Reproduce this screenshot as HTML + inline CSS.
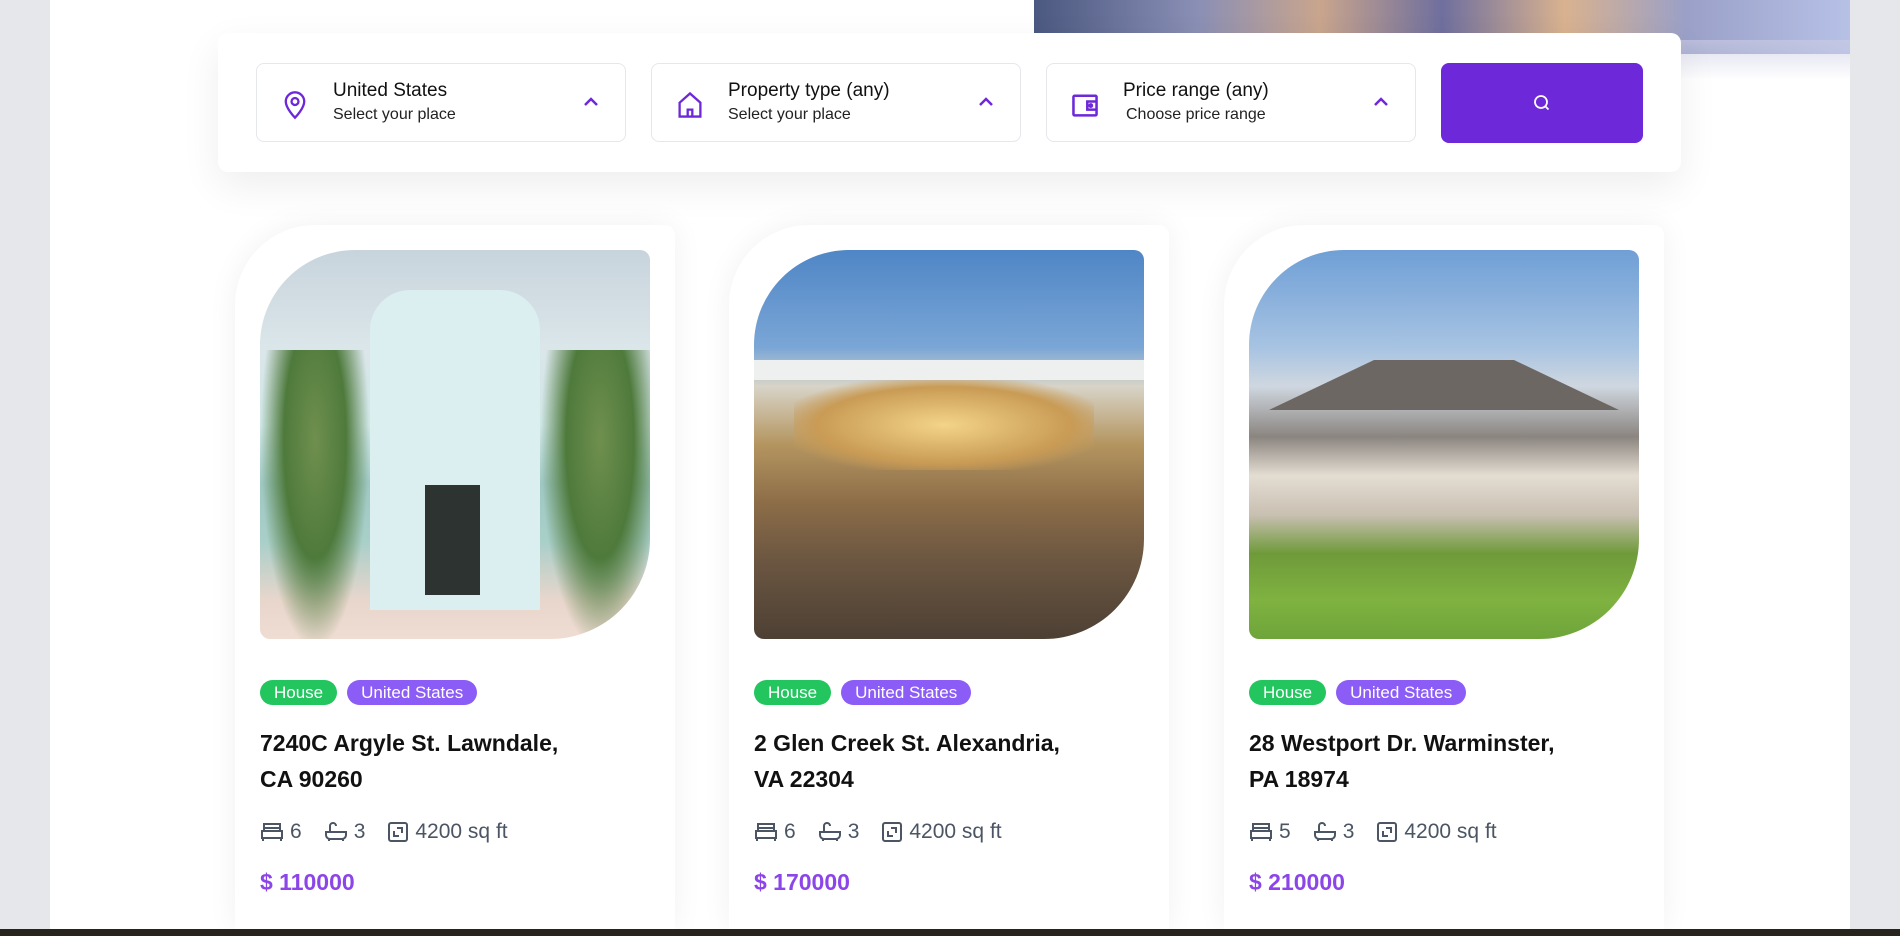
<!DOCTYPE html>
<html><head><meta charset="utf-8"><style>
*{box-sizing:border-box;margin:0;padding:0}
html,body{width:1900px;height:936px;overflow:hidden}
body{background:#e6e7eb;font-family:"Liberation Sans",sans-serif;position:relative}
.main{position:absolute;left:50px;top:0;width:1800px;height:936px;background:#fff}
.hero{position:absolute;left:1034px;top:0;width:816px;height:54px;background:linear-gradient(90deg,#4b5880,#8a8fb5 20%,#c9a58d 35%,#6f6f9e 50%,#d9b28f 65%,#9aa0c8 80%,#b7c1e6);}
.hero:after{content:"";position:absolute;left:0;right:0;top:40px;height:40px;background:linear-gradient(#c9cbe3aa,#ffffff00)}
.search{position:absolute;left:218px;top:33px;width:1463px;height:139px;background:#fff;border-radius:10px;box-shadow:0 14px 40px rgba(0,0,0,.07)}
.field{position:absolute;top:30px;width:370px;height:79px;border:1px solid #e5e7eb;border-radius:8px}
.field svg.ic{position:absolute;left:24px;top:26px}
.field .t{position:absolute;left:76px;top:16px;font-size:19px;color:#111}
.field .s{position:absolute;left:76px;top:42px;font-size:16px;color:#222}
.field .ch{position:absolute;right:26px;top:32px}
.btn{position:absolute;left:1223px;top:30px;width:202px;height:80px;background:#6d28d9;border-radius:8px}
.card{position:absolute;top:225px;width:440px;height:704px;background:#fff;border-radius:80px 10px 0 0;box-shadow:0 0 30px rgba(0,0,0,.06)}
.img{position:absolute;left:25px;top:25px;width:390px;height:389px;border-radius:95px 10px 100px 10px;overflow:hidden}
.tags{position:absolute;left:25px;top:455px;display:flex;gap:10px}
.tag{height:25px;line-height:25px;padding:0 14px;border-radius:13px;color:#fff;font-size:17px}
.title{position:absolute;left:25px;top:500px;font-size:23px;font-weight:bold;line-height:36px;color:#111}
.feat{position:absolute;left:25px;top:820px;font-size:21px;color:#4b5563;display:flex;align-items:center}
.feat svg{margin-right:6px}
.price{position:absolute;left:25px;top:869px;font-size:23px;font-weight:bold;color:#8b45e8}
.bar{position:absolute;left:0;top:929px;width:1900px;height:7px;background:#27231d;z-index:5}
</style></head><body>
<div class="main"></div>
<div class="hero"></div>
<div class="search">
 <div class="field" style="left:38px">
  <svg class="ic" width="28" height="30" viewBox="0 0 24 26" fill="none" stroke="#6d28d9" stroke-width="2"><path d="M12 24s8-8 8-14a8 8 0 0 0-16 0c0 6 8 14 8 14z"/><circle cx="12" cy="10" r="3"/></svg>
  <div class="t">United States</div><div class="s">Select your place</div>
  <svg class="ch" width="16" height="12" viewBox="0 0 16 12"><path d="M2 9l6-6 6 6" stroke="#6d28d9" stroke-width="2.5" fill="none"/></svg></div>
 <div class="field" style="left:433px">
  <svg class="ic" width="28" height="30" viewBox="0 0 24 26" fill="none" stroke="#6d28d9" stroke-width="2"><path d="M3 11l9-8 9 8v12H3z"/><path d="M10 23v-6h4v6"/></svg>
  <div class="t">Property type (any)</div><div class="s">Select your place</div>
  <svg class="ch" width="16" height="12" viewBox="0 0 16 12"><path d="M2 9l6-6 6 6" stroke="#6d28d9" stroke-width="2.5" fill="none"/></svg></div>
 <div class="field" style="left:828px">
  <svg class="ic" width="28" height="30" viewBox="0 0 24 26" fill="none" stroke="#6d28d9" stroke-width="2.2"><rect x="2" y="5" width="20" height="17" rx="1"/><path d="M22 10h-8v7h8"/><circle cx="17" cy="13.5" r="1"/></svg>
  <div class="t">Price range (any)</div><div class="s" style="left:79px">Choose price range</div>
  <svg class="ch" width="16" height="12" viewBox="0 0 16 12"><path d="M2 9l6-6 6 6" stroke="#6d28d9" stroke-width="2.5" fill="none"/></svg></div>
 <div class="btn"><svg style="position:absolute;left:92px;top:31px" width="18" height="18" viewBox="0 0 18 18" fill="none" stroke="#fff" stroke-width="1.8"><circle cx="8" cy="8" r="6"/><path d="M12.5 12.5l3 3"/></svg></div>
</div>

<div class="card" style="left:235px">
 <div class="img" style="background:linear-gradient(180deg,#c8d4dc 0%,#dbe6ea 25%,#cfe6e6 45%,#9fc8c2 60%,#a9cfc9 75%,#e8d6cc 90%,#efdcd2 100%)">
  <div style="position:absolute;left:110px;top:40px;width:170px;height:320px;background:#dbeef0;border-radius:40px 40px 0 0"></div>
  <div style="position:absolute;left:0;top:100px;width:110px;height:300px;background:radial-gradient(ellipse at 50% 30%,#6f8f4e,#4e7a3c 40%,transparent 70%)"></div>
  <div style="position:absolute;left:280px;top:100px;width:120px;height:300px;background:radial-gradient(ellipse at 50% 30%,#6f8f4e,#4e7a3c 40%,transparent 70%)"></div>
  <div style="position:absolute;left:165px;top:235px;width:55px;height:110px;background:#2d3330"></div>
 </div>
 <div class="tags"><span class="tag" style="background:#22c55e">House</span><span class="tag" style="background:#8b5cf6">United States</span></div>
 <div class="title">7240C Argyle St. Lawndale,<br>CA 90260</div>
</div>
<div class="card" style="left:729px">
 <div class="img" style="background:linear-gradient(180deg,#4f86c6 0%,#7aa6d6 25%,#d8d4c8 35%,#b49560 50%,#8c6d48 65%,#6b5641 80%,#4d4034 100%)">
  <div style="position:absolute;left:40px;top:130px;width:300px;height:90px;background:radial-gradient(ellipse,#f3d488,#c99b55 60%,transparent 80%)"></div>
  <div style="position:absolute;left:0;top:110px;width:390px;height:20px;background:#eef0f0"></div>
 </div>
 <div class="tags"><span class="tag" style="background:#22c55e">House</span><span class="tag" style="background:#8b5cf6">United States</span></div>
 <div class="title">2 Glen Creek St. Alexandria,<br>VA 22304</div>
</div>
<div class="card" style="left:1224px">
 <div class="img" style="background:linear-gradient(180deg,#6f9fd6 0%,#a7c3e2 25%,#cfd7e0 35%,#8b8580 48%,#e4ddd2 58%,#c9c0b2 68%,#6f9a3a 78%,#7fb240 90%,#6ea43a 100%)">
  <div style="position:absolute;left:20px;top:110px;width:350px;height:50px;background:#6c6763;clip-path:polygon(0 100%,30% 0,70% 0,100% 100%)"></div>
 </div>
 <div class="tags"><span class="tag" style="background:#22c55e">House</span><span class="tag" style="background:#8b5cf6">United States</span></div>
 <div class="title">28 Westport Dr. Warminster,<br>PA 18974</div>
</div>

<div class="feat" style="left:260px"><svg width="24" height="22" viewBox="0 0 24 22" fill="none" stroke="#4b5563" stroke-width="2"><path d="M4 10V3h16v7M2 10h20v7H2zM3 17v3M21 17v3M4 7h16"/></svg>6<span style="width:22px"></span><svg width="24" height="22" viewBox="0 0 24 22" fill="none" stroke="#4b5563" stroke-width="2"><path d="M2 11h20v3a4 4 0 0 1-4 4H6a4 4 0 0 1-4-4zM6 11V5a3 3 0 0 1 6 0M5 18v2M19 18v2"/></svg>3<span style="width:22px"></span><svg width="22" height="22" viewBox="0 0 22 22" fill="none" stroke="#4b5563" stroke-width="2"><rect x="2" y="2" width="18" height="18" rx="2"/><path d="M7 10v5h5M15 12V7h-5"/></svg>4200 sq ft</div>
<div class="feat" style="left:754px"><svg width="24" height="22" viewBox="0 0 24 22" fill="none" stroke="#4b5563" stroke-width="2"><path d="M4 10V3h16v7M2 10h20v7H2zM3 17v3M21 17v3M4 7h16"/></svg>6<span style="width:22px"></span><svg width="24" height="22" viewBox="0 0 24 22" fill="none" stroke="#4b5563" stroke-width="2"><path d="M2 11h20v3a4 4 0 0 1-4 4H6a4 4 0 0 1-4-4zM6 11V5a3 3 0 0 1 6 0M5 18v2M19 18v2"/></svg>3<span style="width:22px"></span><svg width="22" height="22" viewBox="0 0 22 22" fill="none" stroke="#4b5563" stroke-width="2"><rect x="2" y="2" width="18" height="18" rx="2"/><path d="M7 10v5h5M15 12V7h-5"/></svg>4200 sq ft</div>
<div class="feat" style="left:1249px"><svg width="24" height="22" viewBox="0 0 24 22" fill="none" stroke="#4b5563" stroke-width="2"><path d="M4 10V3h16v7M2 10h20v7H2zM3 17v3M21 17v3M4 7h16"/></svg>5<span style="width:22px"></span><svg width="24" height="22" viewBox="0 0 24 22" fill="none" stroke="#4b5563" stroke-width="2"><path d="M2 11h20v3a4 4 0 0 1-4 4H6a4 4 0 0 1-4-4zM6 11V5a3 3 0 0 1 6 0M5 18v2M19 18v2"/></svg>3<span style="width:22px"></span><svg width="22" height="22" viewBox="0 0 22 22" fill="none" stroke="#4b5563" stroke-width="2"><rect x="2" y="2" width="18" height="18" rx="2"/><path d="M7 10v5h5M15 12V7h-5"/></svg>4200 sq ft</div>
<div class="price" style="left:260px">$ 110000</div>
<div class="price" style="left:754px">$ 170000</div>
<div class="price" style="left:1249px">$ 210000</div>
<div class="bar"></div>
</body></html>
